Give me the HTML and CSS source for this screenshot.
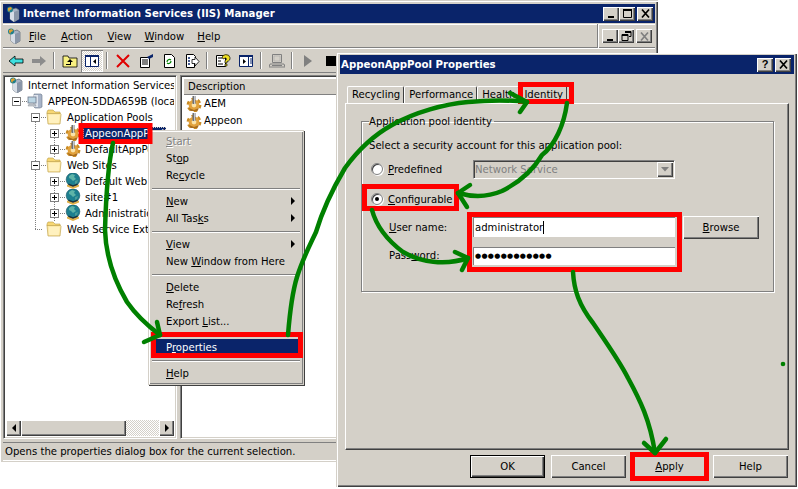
FILE: index.html
```html
<!DOCTYPE html>
<html lang="en">
<head>
<meta charset="utf-8">
<title>Internet Information Services (IIS) Manager</title>
<link rel="stylesheet" href="styles.css">
</head>
<body>
<svg class="defs" width="0" height="0" aria-hidden="true">
  <symbol id="i-iis" viewBox="0 0 16 16">
    <path d="M5 4l6-2 3 2v9l-5 3-4-3z" fill="#a9b4c4" stroke="#5a6470" stroke-width=".7"/>
    <path d="M5 4l4 2v10l-4-3z" fill="#d7dde6"/>
    <path d="M9 6l5-2v9l-5 3z" fill="#8a96a8"/>
    <circle cx="5" cy="3.600" r="3" fill="#1f7f8c"/>
    <path d="M3 2l3-1 1 2-2 1-1 2-1-2z" fill="#e0a030"/>
  </symbol>
  <symbol id="i-server" viewBox="0 0 16 16">
    <path d="M7 1h7l1 1v12l-2 1H8L7 14z" fill="#a8b4c8" stroke="#6a7688" stroke-width=".6"/>
    <path d="M7 2h4v12H7z" fill="#dfe5ee"/>
    <rect x="1" y="4" width="8" height="6" fill="#bcd6e4" stroke="#6a7688" stroke-width=".8"/>
    <path d="M2 11h6l1 2H1z" fill="#c8ccd2" stroke="#808890" stroke-width=".5"/>
  </symbol>
  <symbol id="i-folder" viewBox="0 0 16 16">
    <path d="M1 3l1-2h5l2 2h5v2H1z" fill="#f7d774" stroke="#b99a44" stroke-width=".6"/>
    <path d="M1 4.500h13.500l.5 1-1 9.500H2z" fill="#fde9a6" stroke="#c2a552" stroke-width=".7"/>
    <path d="M3 6h10.500l-.8 8H3z" fill="#fff1bf"/>
  </symbol>
  <symbol id="i-gear" viewBox="0 0 16 16">
    <circle cx="8" cy="9" r="5.600" fill="none" stroke="#c98a22" stroke-width="3.600" stroke-dasharray="3 2.860"/>
    <circle cx="8" cy="9" r="5.400" fill="#e2a23c"/>
    <circle cx="8" cy="9" r="2.400" fill="#fbe3a8"/>
    <path d="M6.500 0h3v8h-3z" fill="#6e7074"/>
    <path d="M8 0h1v8H8z" fill="#c4c6ca"/>
    <path d="M3 12l5 2 5-2-1.500 3h-7z" fill="#a86c1c"/>
  </symbol>
  <symbol id="i-globe" viewBox="0 0 16 16">
    <circle cx="8" cy="6.500" r="6.800" fill="#1d7f8f" stroke="#0f4f5e" stroke-width=".6"/>
    <path d="M4 3l3-2 3 1-1 2 2 2-3 2-2-2-2-1z" fill="#5fb4a8"/>
    <path d="M10 8l3-1-1 3-2 1z" fill="#4a9c98"/>
    <path d="M2 11.500l6 2 6-2v2l-6 2.500-6-2.500z" fill="#e0b048"/>
    <path d="M3.500 10.500l4.500 1.800 4.500-1.800v1.500l-4.500 1.800-4.500-1.800z" fill="#203038"/>
  </symbol>
  <symbol id="i-plus" viewBox="0 0 9 9">
    <rect x=".5" y=".5" width="8" height="8" fill="#fff" stroke="#808080"/>
    <path d="M2 4.500h5M4.500 2v5" stroke="#000"/>
  </symbol>
  <symbol id="i-minus" viewBox="0 0 9 9">
    <rect x=".5" y=".5" width="8" height="8" fill="#fff" stroke="#808080"/>
    <path d="M2 4.500h5" stroke="#000"/>
  </symbol>
</svg>

<section class="window main-window">
  <header class="titlebar">
    <svg class="ico16"><use href="#i-iis"/></svg>
    <span class="title-text">Internet Information Services (IIS) Manager</span>
    <span class="caption-buttons">
      <button class="cap"><svg viewBox="0 0 13 11"><path d="M3 8h6v2H3z"/></svg></button>
      <button class="cap"><svg viewBox="0 0 13 11"><path d="M2.500 1.500h8v8h-8z" fill="none" stroke="#000"/><path d="M2 1h9v2H2z"/></svg></button>
      <button class="cap cap-gap"><svg viewBox="0 0 13 11"><path d="M3 1.500l7 8M10 1.500l-7 8" stroke="#000" stroke-width="1.700" fill="none"/></svg></button>
    </span>
  </header>

  <nav class="menubar">
    <svg class="ico16 menu-ico"><use href="#i-iis"/></svg>
    <span class="menu-item menu-file"><u>F</u>ile</span>
    <span class="menu-item menu-action"><u>A</u>ction</span>
    <span class="menu-item menu-view"><u>V</u>iew</span>
    <span class="menu-item menu-window"><u>W</u>indow</span>
    <span class="menu-item"><u>H</u>elp</span>
    <span class="mdi-buttons">
      <button class="cap"><svg viewBox="0 0 13 11"><path d="M3 8h6v2H3z"/></svg></button>
      <button class="cap"><svg viewBox="0 0 13 11"><path d="M5 .5h6v5H9M2 3.500h6v6H2z" fill="none" stroke="#000"/><path d="M5 0h6v2H5zM2 3h6v2H2z"/></svg></button>
      <button class="cap cap-gap"><svg viewBox="0 0 13 11"><path d="M3 1.500l7 8M10 1.500l-7 8" stroke="#808080" stroke-width="1.700" fill="none"/></svg></button>
    </span>
  </nav>

  <div class="toolbar">
    <svg class="tool" viewBox="0 0 16 16"><path d="M1 8l6-5v3h8v4H7v3z" fill="#3fe0e0" stroke="#000" stroke-width=".8"/></svg>
    <svg class="tool" viewBox="0 0 16 16"><path d="M15 8l-6-5v3H1v4h8v3z" fill="#8c8c8c"/></svg>
    <i class="tool-sep"></i>
    <svg class="tool" viewBox="0 0 16 16"><path d="M1 3h5l1 2h8v9H1z" fill="#f8f080" stroke="#000" stroke-width=".8"/><path d="M8 6l3 3H9v3H4v-1h4V9H5z" fill="#000"/></svg>
    <span class="tool-pressed"><svg class="tool" viewBox="0 0 16 16"><path d="M1.500 2.500h13v11h-13z" fill="#fff" stroke="#0a246a"/><path d="M1 2h14v2H1zM6 3h1v11H6z" fill="#0a246a"/><path d="M12 6v5L9 8.500z" fill="#000"/></svg></span>
    <i class="tool-sep"></i>
    <svg class="tool" viewBox="0 0 16 16"><path d="M2 2l12 12M14 2L2 14" stroke="#e00000" stroke-width="2" fill="none"/></svg>
    <svg class="tool" viewBox="0 0 16 16"><path d="M2.500 4.500h9v10h-9z" fill="#fff" stroke="#000"/><path d="M4 7h6M4 9h6M4 11h6" stroke="#000"/><path d="M9 4l6-3v3l-4 2z" fill="#0a246a"/></svg>
    <svg class="tool" viewBox="0 0 16 16"><path d="M3.500 1.500h7l3 3v10h-10z" fill="#fff" stroke="#000"/><path d="M6 9a2.500 2.500 0 0 1 4-2M10 8a2.500 2.500 0 0 1-4 2" stroke="#008000" stroke-width="1.200" fill="none"/></svg>
    <svg class="tool" viewBox="0 0 16 16"><path d="M2.500 1.500h7l2 2v4h-1v7h-8z" fill="#fff" stroke="#000"/><path d="M4 5h2M4 8h2M4 11h2" stroke="#0a246a" stroke-width="1.400"/><path d="M8 6.500h3V4l4 4.500-4 4.500v-2.500H8z" fill="#fff" stroke="#000" stroke-width=".8"/></svg>
    <i class="tool-sep"></i>
    <svg class="tool" viewBox="0 0 16 16"><path d="M1.500 2.500h9v11h-9z" fill="#fff" stroke="#000"/><path d="M3 5h4M3 8h3M3 11h5" stroke="#000"/><path d="M7 5a4 3.500 0 1 1 5 3.500V10h-2V7.500c2-.5 2-3-.3-2.500L9 6z" fill="#f0e020" stroke="#000" stroke-width=".7"/><path d="M10 11h2v2h-2z" fill="#f0e020" stroke="#000" stroke-width=".6"/></svg>
    <svg class="tool" viewBox="0 0 16 16"><path d="M1.500 2.500h13v11h-13z" fill="#fff" stroke="#0a246a"/><path d="M1 2h14v2H1zM10 3h1v11h-1z" fill="#0a246a"/><path d="M5 6v5l3-2.500z" fill="#000"/><path d="M12 6h2M12 8h2M12 10h2" stroke="#0a246a"/></svg>
    <i class="tool-sep"></i>
    <svg class="tool" viewBox="0 0 16 16"><path d="M3.500 1.500h9v8h-9z" fill="none" stroke="#808080"/><path d="M5 3h6v5H5z" fill="#d4d0c8" stroke="#a0a0a0" stroke-width=".5"/><path d="M1 11h14l1 3H0z" fill="none" stroke="#808080"/><path d="M3 12.500h10" stroke="#808080"/></svg>
    <i class="tool-sep"></i>
    <svg class="tool" viewBox="0 0 16 16"><path d="M4 2l8 6-8 6z" fill="#808080"/></svg>
    <svg class="tool" viewBox="0 0 16 16"><path d="M3 3h10v10H3z" fill="#000"/></svg>
  </div>

  <div class="panes">
    <div class="pane tree-pane">
      <ul class="tree">
        <li class="guide guide-pools"></li>
        <li class="guide guide-apps"></li>
        <li class="guide guide-sites"></li>
        <li class="row row-0"><svg class="ico16"><use href="#i-iis"/></svg><span>Internet Information Services</span></li>
        <li class="row row-1"><svg class="exp"><use href="#i-minus"/></svg><svg class="ico16"><use href="#i-server"/></svg><span>APPEON-5DDA659B (local computer)</span></li>
        <li class="row row-2"><svg class="exp"><use href="#i-minus"/></svg><svg class="ico16"><use href="#i-folder"/></svg><span>Application Pools</span></li>
        <li class="row row-3"><svg class="exp"><use href="#i-plus"/></svg><svg class="ico16"><use href="#i-gear"/></svg><span class="selected">AppeonAppPool</span></li>
        <li class="row row-3"><svg class="exp"><use href="#i-plus"/></svg><svg class="ico16"><use href="#i-gear"/></svg><span>DefaultAppPool</span></li>
        <li class="row row-2"><svg class="exp"><use href="#i-minus"/></svg><svg class="ico16"><use href="#i-folder"/></svg><span>Web Sites</span></li>
        <li class="row row-3"><svg class="exp"><use href="#i-plus"/></svg><svg class="ico16"><use href="#i-globe"/></svg><span>Default Web Site</span></li>
        <li class="row row-3"><svg class="exp"><use href="#i-plus"/></svg><svg class="ico16"><use href="#i-globe"/></svg><span>site#1</span></li>
        <li class="row row-3"><svg class="exp"><use href="#i-plus"/></svg><svg class="ico16"><use href="#i-globe"/></svg><span>Administration Web Site</span></li>
        <li class="row row-noexp"><svg class="ico16"><use href="#i-folder"/></svg><span>Web Service Extensions</span></li>
      </ul>
      <div class="hscroll">
        <button class="sb-btn"><svg viewBox="0 0 8 8"><path d="M6 0v8L2 4z"/></svg></button>
        <span class="sb-thumb"></span>
        <span class="sb-track"></span>
        <button class="sb-btn"><svg viewBox="0 0 8 8"><path d="M2 0v8l4-4z"/></svg></button>
      </div>
    </div>
    <div class="pane list-pane">
      <div class="list-head">Description</div>
      <ul class="list">
        <li><svg class="ico16"><use href="#i-gear"/></svg>AEM</li>
        <li><svg class="ico16"><use href="#i-gear"/></svg>Appeon</li>
        <li><svg class="ico16"><use href="#i-gear"/></svg>DefaultAppPool</li>
      </ul>
    </div>
  </div>

  <footer class="statusbar">Opens the properties dialog box for the current selection.</footer>
</section>

<div class="context-menu">
  <div class="cm-item disabled"><u>S</u>tart</div>
  <div class="cm-item">St<u>o</u>p</div>
  <div class="cm-item">Re<u>c</u>ycle</div>
  <hr class="cm-sep">
  <div class="cm-item sub"><u>N</u>ew</div>
  <div class="cm-item sub">All Tas<u>k</u>s</div>
  <hr class="cm-sep">
  <div class="cm-item sub"><u>V</u>iew</div>
  <div class="cm-item">New <u>W</u>indow from Here</div>
  <hr class="cm-sep">
  <div class="cm-item"><u>D</u>elete</div>
  <div class="cm-item">Re<u>f</u>resh</div>
  <div class="cm-item">Export <u>L</u>ist...</div>
  <hr class="cm-sep">
  <div class="cm-item active">P<u>r</u>operties</div>
  <hr class="cm-sep">
  <div class="cm-item"><u>H</u>elp</div>
</div>

<section class="window dialog">
  <header class="titlebar">
    <span class="title-text dlg-title">AppeonAppPool Properties</span>
    <span class="caption-buttons dlg-caps">
      <button class="cap cap-help">?</button>
      <button class="cap cap-gap"><svg viewBox="0 0 13 11"><path d="M3 1.500l7 8M10 1.500l-7 8" stroke="#000" stroke-width="1.700" fill="none"/></svg></button>
    </span>
  </header>
  <div class="tabs">
    <span class="tab">Recycling</span>
    <span class="tab">Performance</span>
    <span class="tab">Health</span>
    <span class="tab tab-active">Identity</span>
  </div>
  <div class="tab-page">
    <fieldset class="group">
      <legend>Application pool identity</legend>
      <p class="hint">Select a security account for this application pool:</p>
      <div class="line line-pre">
        <span class="radio"></span><label class="radio-label"><u>P</u>redefined</label>
        <span class="combo"><span class="combo-text">Network Service</span><span class="combo-btn"><svg viewBox="0 0 8 5"><path d="M0 0h8L4 4.500z" fill="#808080"/></svg></span></span>
      </div>
      <div class="line line-conf">
        <span class="radio radio-on"></span><label class="radio-label"><u>C</u>onfigurable</label>
      </div>
      <div class="line line-user">
        <label class="field-label"><u>U</u>ser name:</label>
        <span class="input input-user">administrator<i class="caret"></i></span>
        <button class="btn btn-browse"><u>B</u>rowse</button>
      </div>
      <div class="line line-pass">
        <label class="field-label field-label-pass">Pass<u>w</u>ord:</label>
        <span class="input input-pass">●●●●●●●●●●●●</span>
      </div>
    </fieldset>
  </div>
  <div class="dlg-buttons">
    <button class="btn btn-default">OK</button>
    <button class="btn">Cancel</button>
    <button class="btn"><u>A</u>pply</button>
    <button class="btn">Help</button>
  </div>
</section>

<svg class="annotations" viewBox="0 0 798 489" aria-hidden="true">
  <g class="red">
    <path d="M81 125.500h69v16H81zM520.500 84.500h51v17h-51zM364.500 186.500h92v22h-92zM469.500 214.500h210v55h-210zM153.500 334.500h147v21h-147zM632.500 454.500h74v24h-74z"/>
  </g>
  <g class="green">
    <path d="M113 143C108 165 106 195 105 230C106 262 117 285 127 302C136 315 148 326 160 335"/>
    <path d="M157 322l3 13M144 342l16-7"/>
    <path d="M288 335C290 310 293 290 297 277C303 258 310 245 316 232C322 212 332 190 345 168C358 150 374 135 392 125C415 112 445 104 468 102C490 100 510 100 527 102"/>
    <path d="M510 93l17 9M520 112l7-10"/>
    <path d="M567 103C564 125 555 145 542 155C532 172 518 183 502 191C488 197 472 197 458 193"/>
    <path d="M470 185l-12 8M467 207l-9-14"/>
    <path d="M372 210C376 225 387 240 403 252C420 262 445 266 468 258"/>
    <path d="M455 252l13 6M462 270l6-12"/>
    <path d="M573 272C574 290 579 305 593 323C608 345 620 362 628 378C640 400 650 420 655 453"/>
    <path d="M644 443l11 10M666 439l-11 14"/>
  </g>
  <circle cx="783" cy="364" r="2.300" fill="#008000"/>
</svg>
</body>
</html>
```

FILE: styles.css
```css
* { box-sizing: border-box; }
html, body { margin: 0; padding: 0; }
body {
  width: 798px;
  height: 489px;
  position: relative;
  overflow: hidden;
  background: #fff;
  font: 10.1px/13px "DejaVu Sans", sans-serif;
  color: #000;
}
ul { list-style: none; margin: 0; padding: 0; }
button { font: inherit; color: inherit; padding: 0; margin: 0; }
svg { display: block; flex: none; }
.defs { position: absolute; }
.ico16 { width: 16px; height: 16px; }

.window {
  position: absolute;
  display: flex;
  flex-direction: column;
  background: #d4d0c8;
}
.main-window {
  left: 0; top: 0;
  width: 658px;
  height: 462px;
  padding: 3px 3px 1px 3px;
  border-top: 1px solid #d4d0c8;
  box-shadow: inset 1px 1px 0 #fff, inset -1px 0 0 #404040, inset -2px 0 0 #808080;
}
.titlebar {
  height: 19px;
  flex: none;
  display: flex;
  align-items: center;
  padding: 0 2px;
  background: #0a246a;
  color: #fff;
}
.title-text {
  font-weight: bold;
  font-size: 10.2px;
  margin-left: 2px;
  white-space: nowrap;
}
.caption-buttons { margin-left: auto; display: flex; }
.mdi-buttons {
  margin-left: auto;
  margin-right: 3px;
  padding-left: 3px;
  display: flex;
  align-items: center;
  height: 24px;
  border-left: 1px solid #fff;
  box-shadow: -1px 0 0 #808080;
}
.cap {
  width: 16px; height: 14px;
  background: #d4d0c8;
  border: 0;
  box-shadow: inset 1px 1px 0 #fff, inset -1px -1px 0 #404040, inset -2px -2px 0 #808080;
  display: flex; align-items: center; justify-content: center;
  color: #000;
}
.cap svg { width: 13px; height: 11px; }
.cap-gap { margin-left: 2px; }
.cap-help { font-weight: bold; font-size: 11px; line-height: 13px; font-family: "Liberation Sans", sans-serif; }

.menubar {
  height: 25px;
  flex: none;
  display: flex;
  align-items: center;
  border-top: 1px solid #d4d0c8;
  box-shadow: inset 0 1px 0 #fff, inset 0 -1px 0 #808080;
  padding: 0 0 0 3px;
}
.menu-ico { margin-right: 7px; }
.menu-item { margin-right: 15px; white-space: nowrap; }
.menu-action { margin-right: 15px; }
.menu-view { margin-right: 13px; }
.menu-window { margin-right: 13px; }

.toolbar {
  height: 25px;
  flex: none;
  display: flex;
  align-items: center;
  padding-left: 1px;
  box-shadow: inset 0 1px 0 #fff, inset 0 -1px 0 #808080;
}
.tool { width: 16px; height: 16px; margin: 0 3.500px; }
.tool-sep {
  width: 2px; height: 17px;
  margin: 0 3px;
  border-left: 1px solid #808080;
  border-right: 1px solid #fff;
}
.tool-pressed {
  width: 22px; height: 22px;
  display: flex; align-items: center; justify-content: center;
  background: repeating-conic-gradient(#fff 0 25%, #d4d0c8 0 50%) 0 0 / 2px 2px;
  box-shadow: inset 1px 1px 0 #808080, inset -1px -1px 0 #fff;
}
.tool-pressed .tool { margin: 0; }

.panes { flex: 1; display: flex; gap: 3px; padding: 2px 2px 3px 0; min-height: 0; }
.pane {
  background: #fff;
  border: 1px solid #808080;
  border-right-color: #fff;
  border-bottom-color: #fff;
  box-shadow: inset 1px 1px 0 #404040, inset -1px -1px 0 #d4d0c8;
  overflow: hidden;
  position: relative;
  display: flex;
  flex-direction: column;
}
.tree-pane { width: 174px; flex: none; padding: 1px 2px 2px; }
.list-pane { flex: 1; padding: 2px; }
.tree { flex: 1; overflow: hidden; position: relative; }
.row {
  height: 16px;
  display: flex;
  align-items: center;
  white-space: nowrap;
  position: relative;
}
.row .exp { width: 9px; height: 9px; position: relative; z-index: 1; }
.row .ico16 { margin-left: 6px; margin-right: 5px; position: relative; }
.row-1, .row-2, .row-3, .row-noexp {
  background-image: repeating-linear-gradient(90deg, #808080 0 1px, transparent 1px 2px);
  background-repeat: no-repeat;
  background-size: 8px 1px;
  background-position-y: 8px;
}
.row-0 { padding-left: 2px; }
.row-0 .ico16 { margin-left: 0; margin-right: 4px; }
.row-1 { padding-left: 6px; background-position-x: 14px; }
.row-2 { padding-left: 25px; background-position-x: 33px; }
.row-3 { padding-left: 44px; background-position-x: 52px; }
.row-3 .ico16 { margin-right: 4px; }
.row-noexp { padding-left: 34px; background-position-x: 29px; }
/* tree connector lines lie over the white tree background */
.guide {
  position: absolute;
  width: 1px;
  border-left: 1px dotted #808080;
}
.guide-pools { left: 29px; top: 40px; height: 112px; }
.guide-apps { left: 48px; top: 56px; height: 24px; }
.guide-sites { left: 48px; top: 104px; height: 40px; }
.selected {
  background: #0a246a;
  color: #fff;
  outline: 1px dotted #d4d0c8;
  outline-offset: -1px;
  padding: 0 2px;
  margin-left: -2px;
}
.hscroll { height: 16px; flex: none; display: flex; }
.sb-btn {
  width: 15px; height: 16px;
  background: #d4d0c8; border: 0;
  box-shadow: inset 1px 1px 0 #fff, inset -1px -1px 0 #404040, inset -2px -2px 0 #808080;
  display: flex; align-items: center; justify-content: center;
}
.sb-btn svg { width: 8px; height: 8px; }
.sb-thumb {
  width: 105px;
  background: #d4d0c8;
  box-shadow: inset 1px 1px 0 #fff, inset -1px -1px 0 #404040, inset -2px -2px 0 #808080;
}
.sb-track { flex: 1; background: repeating-conic-gradient(#fff 0 25%, #d4d0c8 0 50%) 0 0 / 2px 2px; }

.list-head {
  height: 17px; flex: none;
  padding: 2px 0 0 5px;
  background: #d4d0c8;
  box-shadow: inset 1px 1px 0 #fff, inset -1px -1px 0 #808080;
}
.list { padding: 0 0 0 3px; }
.list li { height: 17px; display: flex; align-items: center; gap: 2px; white-space: nowrap; }
.statusbar {
  height: 19px; flex: none;
  padding: 2px 0 0 2px;
  margin-right: 2px;
  border-top: 1px solid #808080;
  border-bottom: 1px solid #fff;
  white-space: nowrap;
}

.context-menu {
  position: absolute;
  left: 148px; top: 130px;
  width: 156px;
  height: 255px;
  padding: 2px 3px;
  background: #d4d0c8;
  border: 1px solid #d4d0c8;
  box-shadow: inset 1px 1px 0 #fff, inset -1px -1px 0 #808080, 1px 1px 0 #404040;
}
.cm-item { height: 17px; line-height: 17px; padding-left: 14px; position: relative; white-space: nowrap; }
.cm-item.disabled { color: #808080; text-shadow: 1px 1px 0 #fff; }
.cm-item.active { background: #0a246a; color: #fff; }
.cm-item.sub::after {
  content: "";
  position: absolute;
  right: 5px; top: 4px;
  border: 4px solid transparent;
  border-left-color: #000;
  border-right-width: 0;
}
.cm-sep { height: 2px; margin: 4px 0 3px; border: 0; border-top: 1px solid #808080; border-bottom: 1px solid #fff; }

.dialog {
  left: 337px; top: 53px;
  width: 460px;
  height: 434px;
  padding: 2px 3px 0 3px;
  box-shadow: inset 1px 1px 0 #fff, inset -1px -1px 0 #404040, inset -2px -2px 0 #808080, -1px 0 0 #d4d0c8;
}
.dlg-title { margin-left: -1px; }
.dlg-caps { padding-right: 1px; }
.tabs {
  height: 29px; flex: none;
  display: flex;
  align-items: flex-end;
  padding-left: 7px;
}
.tab {
  height: 17px;
  padding: 1px 3px 0 4px;
  border-top: 1px solid #fff;
  border-left: 1px solid #fff;
  border-right: 1px solid #404040;
  border-radius: 2px 2px 0 0;
  white-space: nowrap;
}
.tab-active { height: 19px; padding-top: 2px; position: relative; top: 1px; }
.tab-page {
  height: 347px;
  flex: none;
  margin: 0 5px;
  padding: 11px 14px 0 15px;
  border-top: 1px solid #fff;
  border-left: 1px solid #fff;
  border-right: 1px solid #404040;
  border-bottom: 1px solid #404040;
  box-shadow: inset -1px -1px 0 #808080;
}
.group {
  margin: 0;
  height: 177px;
  padding: 0 0 0 7px;
  border: 1px solid #808080;
  box-shadow: 1px 1px 0 #fff, inset 1px 1px 0 #fff;
  min-width: 0;
}
.group legend { padding: 0 2px 0 0; margin-left: 0; }
.hint { margin: 11px 0 0; white-space: nowrap; }
.line { display: flex; align-items: center; }
.line-pre { height: 18px; margin-top: 8px; }
.line-conf { height: 18px; margin-top: 12px; }
.line-user { height: 23px; margin-top: 8px; padding-left: 20px; }
.line-pass { height: 19px; margin-top: 8px; padding-left: 20px; }
.radio {
  width: 12px; height: 12px;
  margin-left: 2px;
  border-radius: 50%;
  background: #fff;
  border: 1px solid #808080;
  box-shadow: inset 1px 1px 0 #404040, 1px 1px 0 #fff;
  display: flex; align-items: center; justify-content: center;
}
.radio-on::after { content: ""; width: 4px; height: 4px; border-radius: 50%; background: #000; }
.radio-label { margin-left: 5px; width: 85px; white-space: nowrap; }
.line-conf .radio-label { width: auto; }
.combo {
  width: 202px; height: 19px;
  display: flex; align-items: center; justify-content: space-between;
  background: #d4d0c8;
  border: 1px solid #808080;
  border-right-color: #fff; border-bottom-color: #fff;
  box-shadow: inset 1px 1px 0 #404040, inset -1px -1px 0 #d4d0c8;
  color: #808080;
  padding: 0 1px;
}
.combo-btn {
  width: 16px; height: 15px;
  background: #d4d0c8;
  box-shadow: inset 1px 1px 0 #fff, inset -1px -1px 0 #404040, inset -2px -2px 0 #808080;
  display: flex; align-items: center; justify-content: center;
}
.combo-btn svg { width: 8px; height: 5px; }
.field-label { width: 84px; white-space: nowrap; flex: none; }
.field-label-pass { margin-bottom: 3px; }
.input {
  width: 203px;
  background: #fff;
  display: flex; align-items: center;
  padding-left: 2px;
  border-bottom: 1px solid #d4d0c8;
  border-right: 1px solid #d4d0c8;
  box-shadow: inset 1px 1px 0 #808080;
  white-space: nowrap;
}
.input-user { height: 21px; }
.input-pass { height: 19px; font-size: 7px; letter-spacing: .3px; }
.caret { width: 1px; height: 13px; background: #000; }
.btn {
  width: 75px; height: 23px;
  background: #d4d0c8;
  border: 0;
  box-shadow: inset 1px 1px 0 #fff, inset -1px -1px 0 #404040, inset -2px -2px 0 #808080;
  flex: none;
}
.btn-browse { margin-left: 7px; width: 76px; }
.btn-default { outline: 1px solid #000; outline-offset: -1px; box-shadow: inset 2px 2px 0 #fff, inset -2px -2px 0 #404040, inset -3px -3px 0 #808080; }
.dlg-buttons { flex: 1; display: flex; justify-content: flex-end; gap: 6px; padding: 5px 6px 0 0; }

.annotations {
  position: absolute;
  left: 0; top: 0;
  width: 798px; height: 489px;
  pointer-events: none;
}
.red path { fill: none; stroke: #ff0000; stroke-width: 5; }
.green path { fill: none; stroke: #008000; stroke-width: 4.500; stroke-linecap: round; stroke-linejoin: round; }
```
